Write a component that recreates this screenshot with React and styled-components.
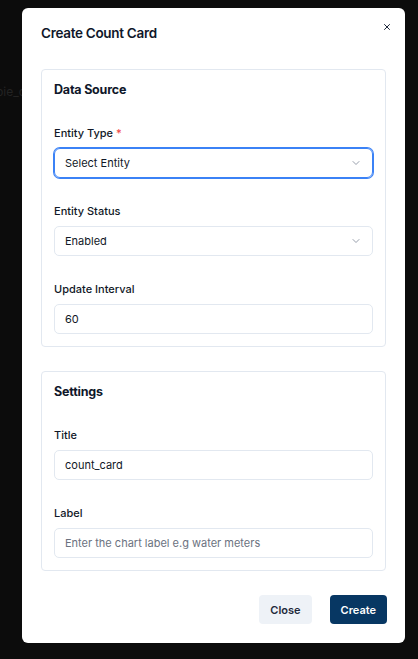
import React from "react";
import styled, { createGlobalStyle } from "styled-components";

const GlobalStyle = createGlobalStyle`
  html, body {
    margin: 0;
    padding: 0;
    background: #0c0c0c;
  }
  * {
    box-sizing: border-box;
  }
`;

const Backdrop = styled.div`
  position: relative;
  width: 418px;
  height: 659px;
  overflow: hidden;
  background: #0c0c0c;
  padding: 8px 0 0 22px;
  font-family: Inter, "Noto Sans", sans-serif;
`;

const BehindText = styled.div`
  position: absolute;
  left: -4px;
  top: 84px;
  font-size: 12px;
  color: #232323;
`;

const Modal = styled.div`
  position: relative;
  width: 383px;
  background: #fff;
  border-radius: 6px;
  padding: 16px 19px 19px;
  display: flex;
  flex-direction: column;
`;

const Title = styled.h2`
  margin: 0;
  font-size: 13.5px;
  font-weight: 600;
  letter-spacing: -0.3px;
  line-height: 18px;
  color: #0f172a;
`;

const CloseX = styled.button`
  position: absolute;
  top: 13px;
  right: 12px;
  border: none;
  background: transparent;
  padding: 0;
  width: 12px;
  height: 12px;
  display: flex;
  align-items: center;
  justify-content: center;
  color: #1e293b;
  cursor: pointer;
`;

const Section = styled.section`
  margin-top: ${(p) => p.$top || 24}px;
  border: 1px solid #e2e8f0;
  border-radius: 4px;
  padding: 12px 12px 12px;
  display: flex;
  flex-direction: column;
`;

const SectionTitle = styled.h3`
  margin: 0 0 28px;
  font-size: 12.5px;
  font-weight: 700;
  line-height: 16px;
  letter-spacing: -0.2px;
  color: #0f172a;
`;

const Fields = styled.div`
  display: flex;
  flex-direction: column;
  gap: 26px;
`;

const Field = styled.div`
  display: flex;
  flex-direction: column;
  gap: 8px;
`;

const Label = styled.label`
  font-size: 11px;
  font-weight: 500;
  line-height: 14px;
  color: #111827;
`;

const Req = styled.span`
  color: #ef4444;
  margin-left: 3px;
`;

const Box = styled.div`
  height: 30px;
  border: 1px solid ${(p) => (p.$focus ? "#3b82f6" : "#e2e8f0")};
  box-shadow: ${(p) => (p.$focus ? "0 0 0 1px #3b82f6" : "none")};
  border-radius: ${(p) => (p.$focus ? 6 : 5)}px;
  padding: 0 10px 0 10px;
  display: flex;
  align-items: center;
  justify-content: space-between;
  font-size: 11px;
  color: ${(p) => (p.$placeholder ? "#6b7280" : "#111827")};
`;

const Chevron = () => (
  <svg width="12" height="12" viewBox="0 0 24 24" fill="none" stroke="#8b93a1" strokeWidth="1.8" strokeLinecap="round" strokeLinejoin="round">
    <path d="m6 9 6 6 6-6" />
  </svg>
);

const Footer = styled.div`
  margin: 24px -1px 0 0;
  display: flex;
  justify-content: flex-end;
  gap: 18px;
`;

const Button = styled.button`
  height: 29px;
  padding: 0 11px;
  border: none;
  border-radius: 4px;
  font-family: Inter, "Noto Sans", sans-serif;
  font-size: 11px;
  font-weight: 600;
  background: ${(p) => (p.$primary ? "#073763" : "#eef2f7")};
  color: ${(p) => (p.$primary ? "#fff" : "#1e293b")};
`;

export default function App() {
  return (
    <>
      <GlobalStyle />
      <Backdrop>
        <BehindText>pie_chart</BehindText>
        <Modal>
          <Title>Create Count Card</Title>
          <CloseX aria-label="Close">
            <svg width="10" height="10" viewBox="0 0 24 24" fill="none" stroke="currentColor" strokeWidth="2.4" strokeLinecap="round">
              <path d="M18 6 6 18M6 6l12 12" />
            </svg>
          </CloseX>

          <Section $top={27}>
            <SectionTitle>Data Source</SectionTitle>
            <Fields>
              <Field>
                <Label>
                  Entity Type<Req>*</Req>
                </Label>
                <Box $focus>
                  Select Entity
                  <Chevron />
                </Box>
              </Field>
              <Field>
                <Label>Entity Status</Label>
                <Box>
                  Enabled
                  <Chevron />
                </Box>
              </Field>
              <Field>
                <Label>Update Interval</Label>
                <Box>60</Box>
              </Field>
            </Fields>
          </Section>

          <Section>
            <SectionTitle>Settings</SectionTitle>
            <Fields>
              <Field>
                <Label>Title</Label>
                <Box>count_card</Box>
              </Field>
              <Field>
                <Label>Label</Label>
                <Box $placeholder>Enter the chart label e.g water meters</Box>
              </Field>
            </Fields>
          </Section>

          <Footer>
            <Button>Close</Button>
            <Button $primary>Create</Button>
          </Footer>
        </Modal>
      </Backdrop>
    </>
  );
}
